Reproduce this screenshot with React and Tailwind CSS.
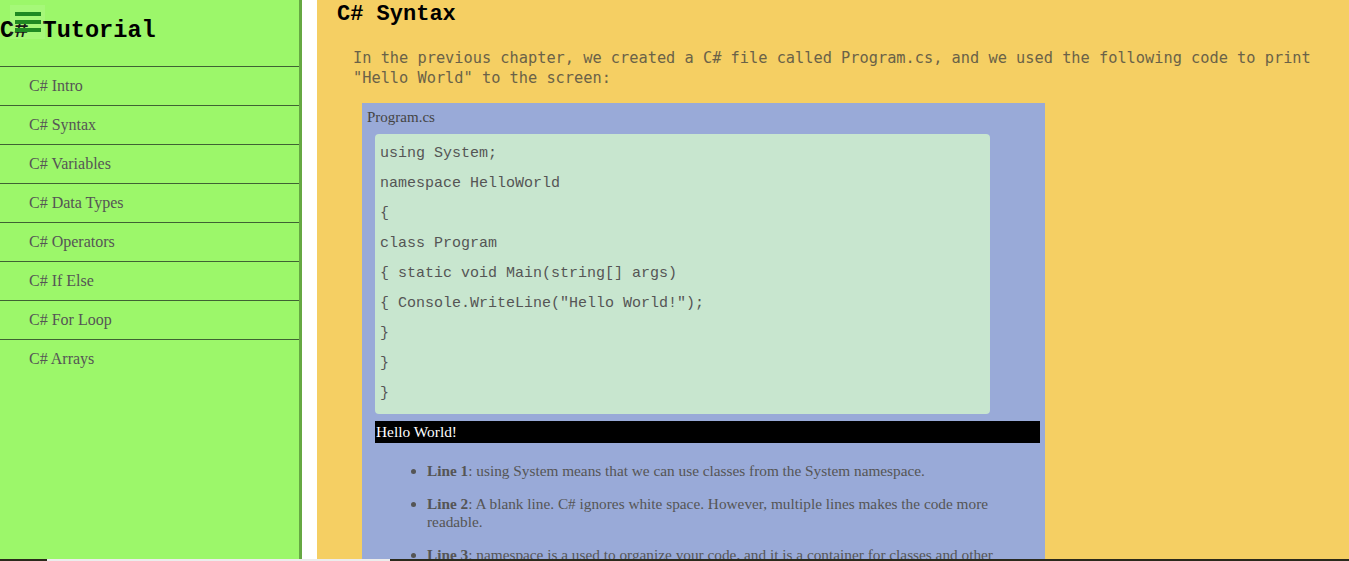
import React from "react";

const navItems = [
  "C# Intro",
  "C# Syntax",
  "C# Variables",
  "C# Data Types",
  "C# Operators",
  "C# If Else",
  "C# For Loop",
  "C# Arrays",
];

const codeLines = [
  "using System;",
  "namespace HelloWorld",
  "{",
  "class Program",
  "{ static void Main(string[] args)",
  '{ Console.WriteLine("Hello World!");',
  "}",
  "}",
  "}",
];

export default function App() {
  return (
    <div className="relative flex h-[561px] overflow-hidden bg-white">
      {/* Sidebar */}
      <aside className="relative w-[302px] shrink-0 bg-[#9cf76a] border-r-[3px] border-[#66a843]">
        <div className="h-[66px] pt-[17px]">
          <h2 className="m-0 text-[23.6px] leading-[28px] font-bold text-black [font-family:'Liberation_Mono',monospace]">
            C# Tutorial
          </h2>
        </div>
        <div className="absolute left-[10px] top-[5px] w-[35px] h-[34px] bg-white/10 flex flex-col items-center justify-center gap-[4px]">
          <span className="block w-[26px] h-[4px] bg-[#1f8a22]"></span>
          <span className="block w-[26px] h-[4px] bg-[#1f8a22]"></span>
          <span className="block w-[26px] h-[4px] bg-[#1f8a22]"></span>
        </div>
        <ul>
          {navItems.map((item) => (
            <li
              key={item}
              className="h-[39px] border-t border-[#3f6233] flex items-center pl-[29px] text-[16px] text-[#555] [font-family:'Liberation_Serif',serif]"
            >
              {item}
            </li>
          ))}
        </ul>
      </aside>

      {/* Gap */}
      <div className="w-[15px] shrink-0 bg-white"></div>

      {/* Main */}
      <main className="flex-1 bg-[#f5cf63] pl-[20px] pr-[20px]">
        <h1 className="m-0 pt-[2px] text-[22px] leading-[26px] font-bold text-black [font-family:'Liberation_Mono',monospace]">
          C# Syntax
        </h1>
        <p className="mt-[20px] ml-[16px] text-[15.3px] leading-[20px] text-[#6a6248] [font-family:'DejaVu_Sans_Mono',monospace]">
          In the previous chapter, we created a C# file called Program.cs, and we used the following code to print "Hello World" to the screen:
        </p>

        <div className="mt-[15px] ml-[25px] w-[683px] bg-[#99aad8] pl-[5px] pt-[6px] pb-[20px]">
          <div className="text-[15px] leading-[17px] text-[#444] [font-family:'Liberation_Serif',serif]">
            Program.cs
          </div>
          <div className="mt-[8px] ml-[8px] w-[615px] rounded-[4px] bg-[#c8e6cf] pl-[5px] pt-[5px] pb-[5px]">
            {codeLines.map((line, i) => (
              <div
                key={i}
                className="h-[30px] leading-[30px] text-[15px] text-[#555] whitespace-pre [font-family:'Liberation_Mono',monospace]"
              >
                {line}
              </div>
            ))}
          </div>
          <div className="mt-[7px] ml-[8px] w-[665px] h-[22px] bg-black pl-[1px] text-[15.4px] leading-[22px] text-white [font-family:'Liberation_Serif',serif]">
            Hello World!
          </div>
          <ul className="mt-[19px] ml-[60px] mr-[10px] list-disc text-[15.3px] leading-[18px] text-[#555] [font-family:'Liberation_Serif',serif]">
            <li className="mb-[15px]">
              <b>Line 1</b>: using System means that we can use classes from the System namespace.
            </li>
            <li className="mb-[15px] pr-[40px]">
              <b>Line 2</b>: A blank line. C# ignores white space. However, multiple lines makes the code more readable.
            </li>
            <li className="mb-[15px] pr-[40px]">
              <b>Line 3</b>: namespace is a used to organize your code, and it is a container for classes and other namespaces.
            </li>
          </ul>
        </div>
      </main>

      {/* Bottom strip */}
      <div className="absolute left-0 right-0 bottom-0 h-[2px] flex">
        <div className="w-[47px] bg-[#2b2a1c]"></div>
        <div className="w-[343px] bg-[#ececec]"></div>
        <div className="flex-1 bg-[#2b2a1c]"></div>
      </div>
    </div>
  );
}
